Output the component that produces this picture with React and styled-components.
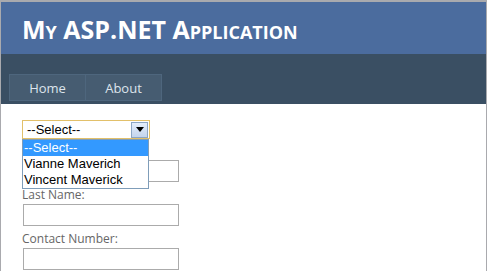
import React from "react";
import styled, { createGlobalStyle } from "styled-components";

const Global = createGlobalStyle`
  html, body { margin: 0; padding: 0; background: #a9aaae; }
  body { font-family: "Open Sans", "Noto Sans", sans-serif; }
`;

const Page = styled.div`
  margin: 2px 1px 0 1px;
  width: 485px;
  height: 269px;
  background: #fff;
  overflow: hidden;
`;

const Header = styled.div`
  background: #4b6c9e;
  height: 52px;
  display: flex;
  align-items: center;
  padding-left: 21px;
`;

const Title = styled.h1`
  margin: 0;
  color: #fff;
  font-family: "Open Sans", sans-serif;
  font-weight: 700;
  font-size: 25px;
  font-variant: small-caps;
  letter-spacing: 0;
  line-height: 1;
  margin-top: 3px;
`;

const MenuBar = styled.div`
  background: #3a4f63;
  height: 50px;
  display: flex;
  align-items: flex-end;
  padding: 0 0 3px 8px;
  box-sizing: border-box;
`;

const MenuItem = styled.div`
  width: 75px;
  height: 25px;
  border: 1px solid #4e667d;
  margin-right: -1px;
  background: #465c71;
  color: #dde4ec;
  font-size: 13px;
  display: flex;
  align-items: center;
  justify-content: center;
`;

const Main = styled.div`
  position: relative;
  padding: 16px 0 0 21px;
`;

const SelectBox = styled.div`
  width: 121px;
  height: 17px;
  border: 1px solid #e2c06a;
  display: flex;
  align-items: center;
  justify-content: space-between;
  font-family: "Liberation Sans", Arial, sans-serif;
  font-size: 13px;
  color: #000;
  padding-left: 4px;
  padding-right: 1px;
`;

const ArrowBtn = styled.div`
  width: 15px;
  height: 14px;
  border: 1px solid #8ca6c5;
  background: linear-gradient(#e3edfb, #c4d5ee);
  display: flex;
  align-items: center;
  justify-content: center;
`;

const List = styled.div`
  position: absolute;
  left: 21px;
  top: 35px;
  width: 125px;
  border: 1px solid #7f9db9;
  background: #fff;
  font-family: "Liberation Sans", Arial, sans-serif;
  font-size: 13px;
  z-index: 2;
`;

const Option = styled.div`
  height: 16px;
  line-height: 16px;
  padding-left: 1px;
  background: ${(p) => (p.$active ? "#3399ff" : "transparent")};
  color: ${(p) => (p.$active ? "#fff" : "#000")};
`;

const Field = styled.div`
  display: flex;
  flex-direction: column;
`;

const Label = styled.label`
  color: #666;
  font-size: 12px;
  line-height: 14px;
  margin-top: ${(p) => p.$top}px;
`;

const TextBox = styled.div`
  width: 154px;
  height: 20px;
  border: 1px solid #ababab;
  margin-top: ${(p) => p.$top}px;
  margin-left: 1px;
`;

export default function App() {
  return (
    <>
      <Global />
      <Page>
        <Header>
          <Title>My ASP.NET Application</Title>
        </Header>
        <MenuBar>
          <MenuItem>Home</MenuItem>
          <MenuItem>About</MenuItem>
        </MenuBar>
        <Main>
          <SelectBox>
            <span>--Select--</span>
            <ArrowBtn>
              <svg width="8" height="5" viewBox="0 0 8 5">
                <path d="M0 0 H8 L4 5 Z" fill="#000" />
              </svg>
            </ArrowBtn>
          </SelectBox>
          <List>
            <Option $active>--Select--</Option>
            <Option>Vianne Maverich</Option>
            <Option>Vincent Maverick</Option>
          </List>
          <Field>
            <Label $top={5}>First Name:</Label>
            <TextBox $top={2} />
            <Label $top={6}>Last Name:</Label>
            <TextBox $top={2} />
            <Label $top={6}>Contact Number:</Label>
            <TextBox $top={2} />
          </Field>
        </Main>
      </Page>
    </>
  );
}
